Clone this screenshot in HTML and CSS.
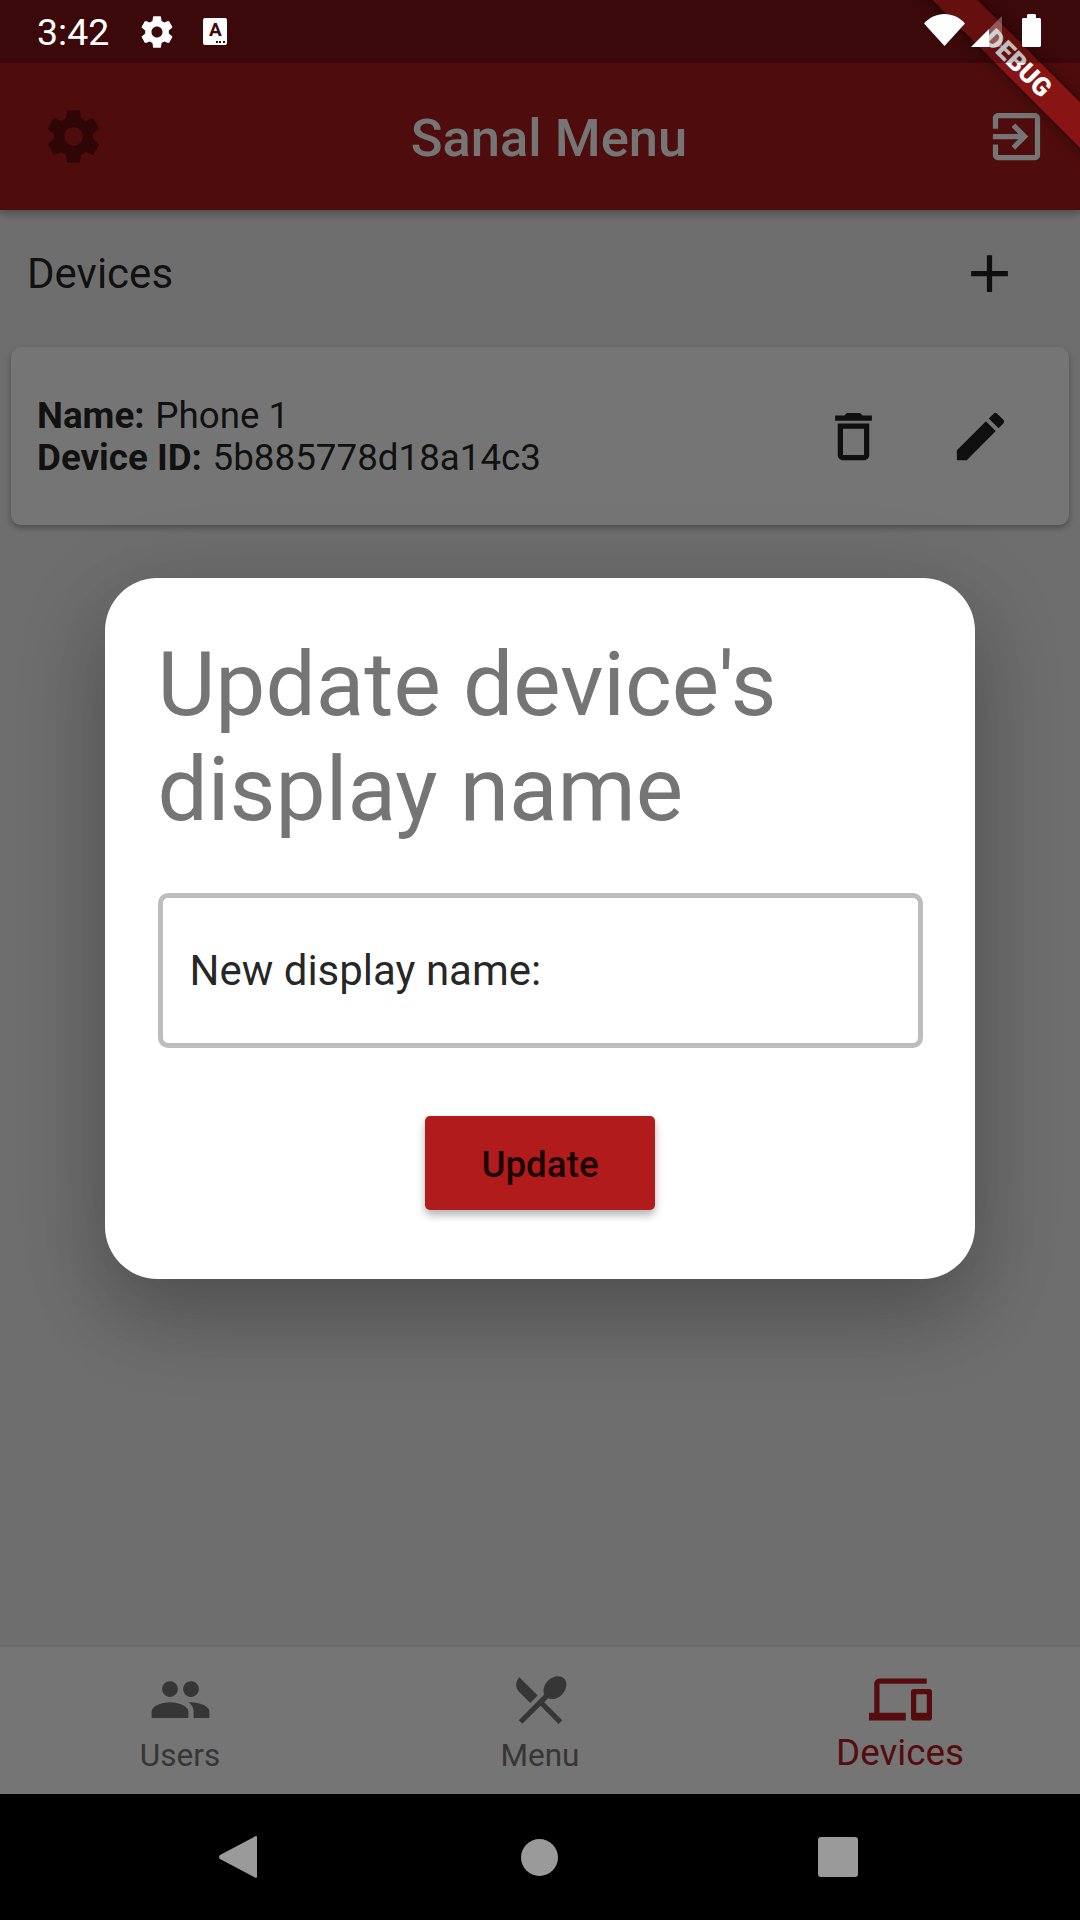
FILE: index.html
```html
<!DOCTYPE html>
<html lang="en">
  <head>
    <meta charset="UTF-8" />
    <meta name="viewport" content="width=device-width, initial-scale=1" />
    <title>Sanal Menu | Devices</title>
    <link rel="stylesheet" href="styles.css">
  </head>
  <body>
    <div class="screen">
      <div class="status-bar">
        <span class="status-time">3:42</span>
        <svg class="status-gear" viewBox="0 0 24 24"><path d="M19.43 12.98c.04-.32.07-.64.07-.98s-.03-.66-.07-.98l2.11-1.65c.19-.15.24-.42.12-.64l-2-3.46c-.12-.22-.39-.3-.61-.22l-2.49 1c-.52-.4-1.08-.73-1.69-.98l-.38-2.65C14.46 2.18 14.25 2 14 2h-4c-.25 0-.46.18-.49.42l-.38 2.65c-.61.25-1.17.59-1.69.98l-2.49-1c-.23-.09-.49 0-.61.22l-2 3.46c-.13.22-.07.49.12.64l2.11 1.65c-.04.32-.07.65-.07.98s.03.66.07.98l-2.11 1.65c-.19.15-.24.42-.12.64l2 3.46c.12.22.39.3.61.22l2.49-1c.52.4 1.08.73 1.69.98l.38 2.65c.03.24.24.42.49.42h4c.25 0 .46-.18.49-.42l.38-2.65c.61-.25 1.17-.59 1.69-.98l2.49 1c.23.09.49 0 .61-.22l2-3.46c.12-.22.07-.49-.12-.64l-2.11-1.65zM12 15.5c-1.93 0-3.5-1.57-3.5-3.5s1.57-3.5 3.5-3.5 3.5 1.57 3.5 3.5-1.57 3.5-3.5 3.5z"/></svg>
        <span class="status-a">A<i class="status-dots"></i></span>
        <div class="status-right">
          <svg class="status-wifi" viewBox="0 0 41 32"><path d="M0 9.5C5.5 3.5 12.500 0 20.500 0S35.500 3.500 41 9.500L20.500 32z"/></svg>
          <svg class="status-signal" viewBox="0 0 31 31"><path class="signal-empty" d="M18 13 31 0v31H18z"/><path d="M0 31 18 13v18z"/></svg>
          <svg class="status-battery" viewBox="0 0 19 33"><path d="M5 4V1.500C5 .7 5.700 0 6.500 0h6c.8 0 1.500.7 1.500 1.500V4h3.500c.8 0 1.500.7 1.500 1.500v26c0 .8-.7 1.500-1.500 1.500h-16C.7 33 0 32.300 0 31.500v-26C0 4.700.7 4 1.500 4z"/></svg>
        </div>
      </div>

      <div class="app">
        <header class="app-bar">
          <svg class="icon gear-icon" viewBox="0 0 24 24"><path d="M19.43 12.98c.04-.32.07-.64.07-.98s-.03-.66-.07-.98l2.11-1.65c.19-.15.24-.42.12-.64l-2-3.46c-.12-.22-.39-.3-.61-.22l-2.49 1c-.52-.4-1.08-.73-1.69-.98l-.38-2.65C14.46 2.18 14.25 2 14 2h-4c-.25 0-.46.18-.49.42l-.38 2.65c-.61.25-1.17.59-1.69.98l-2.49-1c-.23-.09-.49 0-.61.22l-2 3.46c-.13.22-.07.49.12.64l2.11 1.65c-.04.32-.07.65-.07.98s.03.66.07.98l-2.11 1.65c-.19.15-.24.42-.12.64l2 3.46c.12.22.39.3.61.22l2.49-1c.52.4 1.08.73 1.69.98l.38 2.65c.03.24.24.42.49.42h4c.25 0 .46-.18.49-.42l.38-2.65c.61-.25 1.17-.59 1.69-.98l2.49 1c.23.09.49 0 .61-.22l2-3.46c.12-.22.07-.49-.12-.64l-2.11-1.65zM12 15.5c-1.93 0-3.5-1.57-3.5-3.5s1.57-3.5 3.5-3.5 3.5 1.57 3.5 3.5-1.57 3.5-3.5 3.5z"/></svg>
          <h1 class="app-title">Sanal Menu</h1>
          <svg class="icon exit-icon" viewBox="0 0 24 24"><path d="M10.09 15.59L11.5 17l5-5-5-5-1.41 1.41L12.67 11H3v2h9.670l-2.58 2.59zM19 3H5c-1.11 0-2 .9-2 2v4h2V5h14v14H5v-4H3v4c0 1.100.89 2 2 2h14c1.100 0 2-.9 2-2V5c0-1.100-.9-2-2-2z"/></svg>
        </header>

        <main class="content">
          <div class="section-head">
            <h2 class="section-title">Devices</h2>
            <svg class="icon add-icon" viewBox="0 0 24 24"><path d="M19 13h-6v6h-2v-6H5v-2h6V5h2v6h6v2z"/></svg>
          </div>
          <div class="device-card">
            <div class="device-info">
              <p><b>Name:</b> Phone 1</p>
              <p><b>Device ID:</b> 5b885778d18a14c3</p>
            </div>
            <svg class="icon delete-icon" viewBox="0 0 24 24"><path d="M6 19c0 1.100.9 2 2 2h8c1.100 0 2-.9 2-2V7H6v12zM8 9h8v10H8V9zm7.500-5l-1-1h-5l-1 1H5v2h14V4z"/></svg>
            <svg class="icon edit-icon" viewBox="0 0 24 24"><path d="M3 17.250V21h3.750L17.810 9.940l-3.750-3.750L3 17.250zM20.710 7.040c.39-.39.39-1.020 0-1.410l-2.340-2.340c-.39-.39-1.020-.39-1.410 0l-1.830 1.830 3.750 3.750 1.830-1.830z"/></svg>
          </div>
        </main>

        <nav class="bottom-nav">
          <div class="nav-item">
            <svg class="icon" viewBox="0 0 24 24"><path d="M16 11c1.660 0 2.990-1.340 2.990-3S17.660 5 16 5c-1.660 0-3 1.340-3 3s1.340 3 3 3zm-8 0c1.660 0 2.990-1.340 2.990-3S9.660 5 8 5C6.340 5 5 6.340 5 8s1.340 3 3 3zm0 2c-2.330 0-7 1.170-7 3.500V19h14v-2.500c0-2.330-4.670-3.500-7-3.500zm8 0c-.29 0-.62.02-.97.05 1.160.84 1.970 1.970 1.970 3.450V19h6v-2.500c0-2.330-4.670-3.500-7-3.500z"/></svg>
            <span class="nav-label">Users</span>
          </div>
          <div class="nav-item">
            <svg class="icon" viewBox="0 0 24 24"><path d="M8.100 13.340l2.830-2.830L3.910 3.500c-1.560 1.560-1.560 4.090 0 5.660l4.190 4.180zm6.780-1.810c1.530.71 3.680.21 5.270-1.380 1.910-1.910 2.280-4.650.81-6.120-1.460-1.460-4.200-1.100-6.120.81-1.590 1.590-2.090 3.740-1.380 5.270L3.700 19.870l1.410 1.410L12 14.410l6.880 6.880 1.410-1.410L13.410 13l1.470-1.470z"/></svg>
            <span class="nav-label">Menu</span>
          </div>
          <div class="nav-item nav-item-active">
            <svg class="icon" viewBox="0 0 24 24"><path d="M4 6h18V4H4c-1.100 0-2 .9-2 2v11H0v3h14v-3H4V6zm19 2h-6c-.55 0-1 .45-1 1v10c0 .55.45 1 1 1h6c.55 0 1-.45 1-1V9c0-.55-.45-1-1-1zm-1 9h-4v-7h4v7z"/></svg>
            <span class="nav-label">Devices</span>
          </div>
        </nav>

        <div class="barrier">
          <div class="dialog">
            <h2 class="dialog-title">Update device's display name</h2>
            <div class="dialog-field">New display name:</div>
            <button class="dialog-button" type="button">Update</button>
          </div>
        </div>
      </div>

      <div class="system-nav">
        <svg class="sys-back" viewBox="0 0 38 42"><path d="M36 .5c1.200-.9 2-.3 2 1v39c0 1.300-.8 1.900-2 1L1 23c-1.300-1-1.300-3 0-4z"/></svg>
        <span class="sys-home"></span>
        <span class="sys-recent"></span>
      </div>

      <div class="debug-banner">DEBUG</div>
    </div>
  </body>
</html>
```

FILE: styles.css
```css
* {
  box-sizing: border-box;
}
body {
  margin: 0;
  font-family: Roboto, sans-serif;
  background: #000;
}
h1,
h2,
p {
  margin: 0;
  font-weight: 400;
}
svg {
  display: block;
  fill: currentColor;
}
.screen {
  position: relative;
  width: 1080px;
  height: 1920px;
  overflow: hidden;
  display: flex;
  flex-direction: column;
  background-color: #4f0c0c;
}

/* status bar: translucent, so it also darkens the debug ribbon under it */
.status-bar {
  position: relative;
  z-index: 2;
  height: 63px;
  flex: none;
  background-color: rgba(0, 0, 0, 0.25);
  color: #fff;
  display: flex;
  align-items: center;
  padding-left: 37px;
}
.status-time {
  font-size: 37.5px;
  width: 101px;
}
.status-gear {
  width: 38px;
  height: 38px;
}
.status-a {
  position: relative;
  width: 24px;
  height: 27px;
  margin-left: 27px;
  background-color: #fff;
  border-radius: 2px;
  color: #3b0a0a;
  font-size: 19px;
  font-weight: 700;
  line-height: 24px;
  padding-left: 6px;
}
.status-dots {
  position: absolute;
  right: 2px;
  bottom: 2px;
  width: 9px;
  height: 2px;
  background: repeating-linear-gradient(90deg, #3b0a0a 0 2px, #fff 2px 3.500px);
}
.status-right {
  margin-left: auto;
  display: flex;
  align-items: flex-start;
  padding: 14px 39px 0 0;
  height: 63px;
}
.status-wifi {
  width: 41px;
  height: 32px;
}
.status-signal {
  width: 31px;
  height: 31px;
  margin: 2px 0 0 6px;
}
.signal-empty {
  opacity: 0.3;
}
.status-battery {
  width: 19px;
  height: 33px;
  margin-left: 20px;
}

/* app */
.app {
  position: relative;
  flex: 1;
  display: flex;
  flex-direction: column;
  min-height: 0;
  background-color: #f0f0f0;
}
.icon {
  width: 63px;
  height: 63px;
  flex: none;
}
.app-bar {
  height: 147px;
  flex: none;
  background-color: #ac1b1b;
  color: #fff;
  display: flex;
  align-items: center;
  justify-content: space-between;
  padding: 0 32px 0 42px;
  box-shadow: 0 4px 8px rgba(0, 0, 0, 0.3);
}
.gear-icon {
  color: #690c0c;
}
.app-title {
  font-size: 52.5px;
  font-weight: 500;
  margin-left: 8px;
  padding-top: 2px;
}
.content {
  flex: 1;
  padding: 0 11px;
}
.section-head {
  height: 137px;
  display: flex;
  align-items: center;
  justify-content: space-between;
  padding: 0 48px 11px 16px;
}
.section-title {
  font-size: 42px;
  color: rgba(0, 0, 0, 0.87);
}
.add-icon {
  color: rgba(0, 0, 0, 0.87);
}
.device-card {
  height: 178px;
  background-color: #fff;
  border-radius: 10px;
  box-shadow: 0 3px 6px rgba(0, 0, 0, 0.3);
  display: flex;
  align-items: center;
  padding-left: 26px;
  color: rgba(0, 0, 0, 0.87);
}
.device-info {
  flex: 1;
  font-size: 36.75px;
  line-height: 42px;
  padding-top: 2px;
}
.device-info b {
  font-weight: 700;
  margin-right: 1.500px;
}
.delete-icon {
  margin-right: 64px;
}
.edit-icon {
  margin-right: 57px;
}

/* bottom nav */
.bottom-nav {
  height: 147px;
  flex: none;
  background-color: #fff;
  display: flex;
  box-shadow: 0 -1px 3px rgba(0, 0, 0, 0.08);
  color: #767676;
}
.nav-item {
  flex: 1;
  display: flex;
  flex-direction: column;
  align-items: center;
  padding-top: 21px;
  font-size: 31.5px;
  line-height: 37px;
}
.nav-label {
  margin-top: 6px;
}
.nav-item-active {
  color: #b71c1c;
  font-size: 36.75px;
  line-height: 37px;
}
.nav-item-active .nav-label {
  margin-top: 3px;
}

/* dialog */
.barrier {
  position: absolute;
  inset: 0;
  background-color: rgba(0, 0, 0, 0.54);
  display: flex;
  align-items: center;
  justify-content: center;
}
.dialog {
  width: 870px;
  height: 701px;
  background-color: #fff;
  border-radius: 52.500px;
  padding: 54px 52.500px 0;
  display: flex;
  flex-direction: column;
  align-items: center;
  box-shadow: 0 40px 80px rgba(0, 0, 0, 0.2), 0 15px 100px rgba(0, 0, 0, 0.12);
}
.dialog-title {
  width: 100%;
  font-size: 89.25px;
  line-height: 105px;
  color: #757575;
}
.dialog-field {
  width: 100%;
  height: 155px;
  margin-top: 51px;
  border: 5px solid #bdbdbd;
  border-radius: 10px;
  display: flex;
  align-items: center;
  padding-left: 27px;
  font-size: 42px;
  color: rgba(0, 0, 0, 0.87);
}
.dialog-button {
  width: 230px;
  height: 94px;
  margin-top: 68px;
  padding: 2px 0 0;
  border: none;
  border-radius: 5px;
  background-color: #b11b1b;
  color: rgba(0, 0, 0, 0.87);
  font-family: Roboto, sans-serif;
  font-size: 36.75px;
  font-weight: 500;
  box-shadow: 0 5px 8px rgba(0, 0, 0, 0.3);
}

/* android nav */
.system-nav {
  height: 126px;
  flex: none;
  background-color: #000;
  display: flex;
  align-items: center;
  padding-left: 219px;
}
.sys-back {
  width: 38px;
  height: 42px;
  color: #9a9a9a;
}
.sys-home {
  width: 37px;
  height: 37px;
  margin-left: 264px;
  border-radius: 50%;
  background-color: #9a9a9a;
}
.sys-recent {
  width: 40px;
  height: 40px;
  margin-left: 260px;
  border-radius: 3px;
  background-color: #9a9a9a;
}

/* debug ribbon sits over the app, under the status bar */
.debug-banner {
  position: absolute;
  z-index: 1;
  top: 47px;
  left: 868px;
  width: 300px;
  height: 32px;
  transform: rotate(45deg);
  background-color: rgba(170, 26, 26, 0.63);
  box-shadow: 0 0 14px rgba(0, 0, 0, 0.5);
  color: #fff;
  font-size: 26px;
  font-weight: 900;
  line-height: 32px;
  text-align: center;
}
```
